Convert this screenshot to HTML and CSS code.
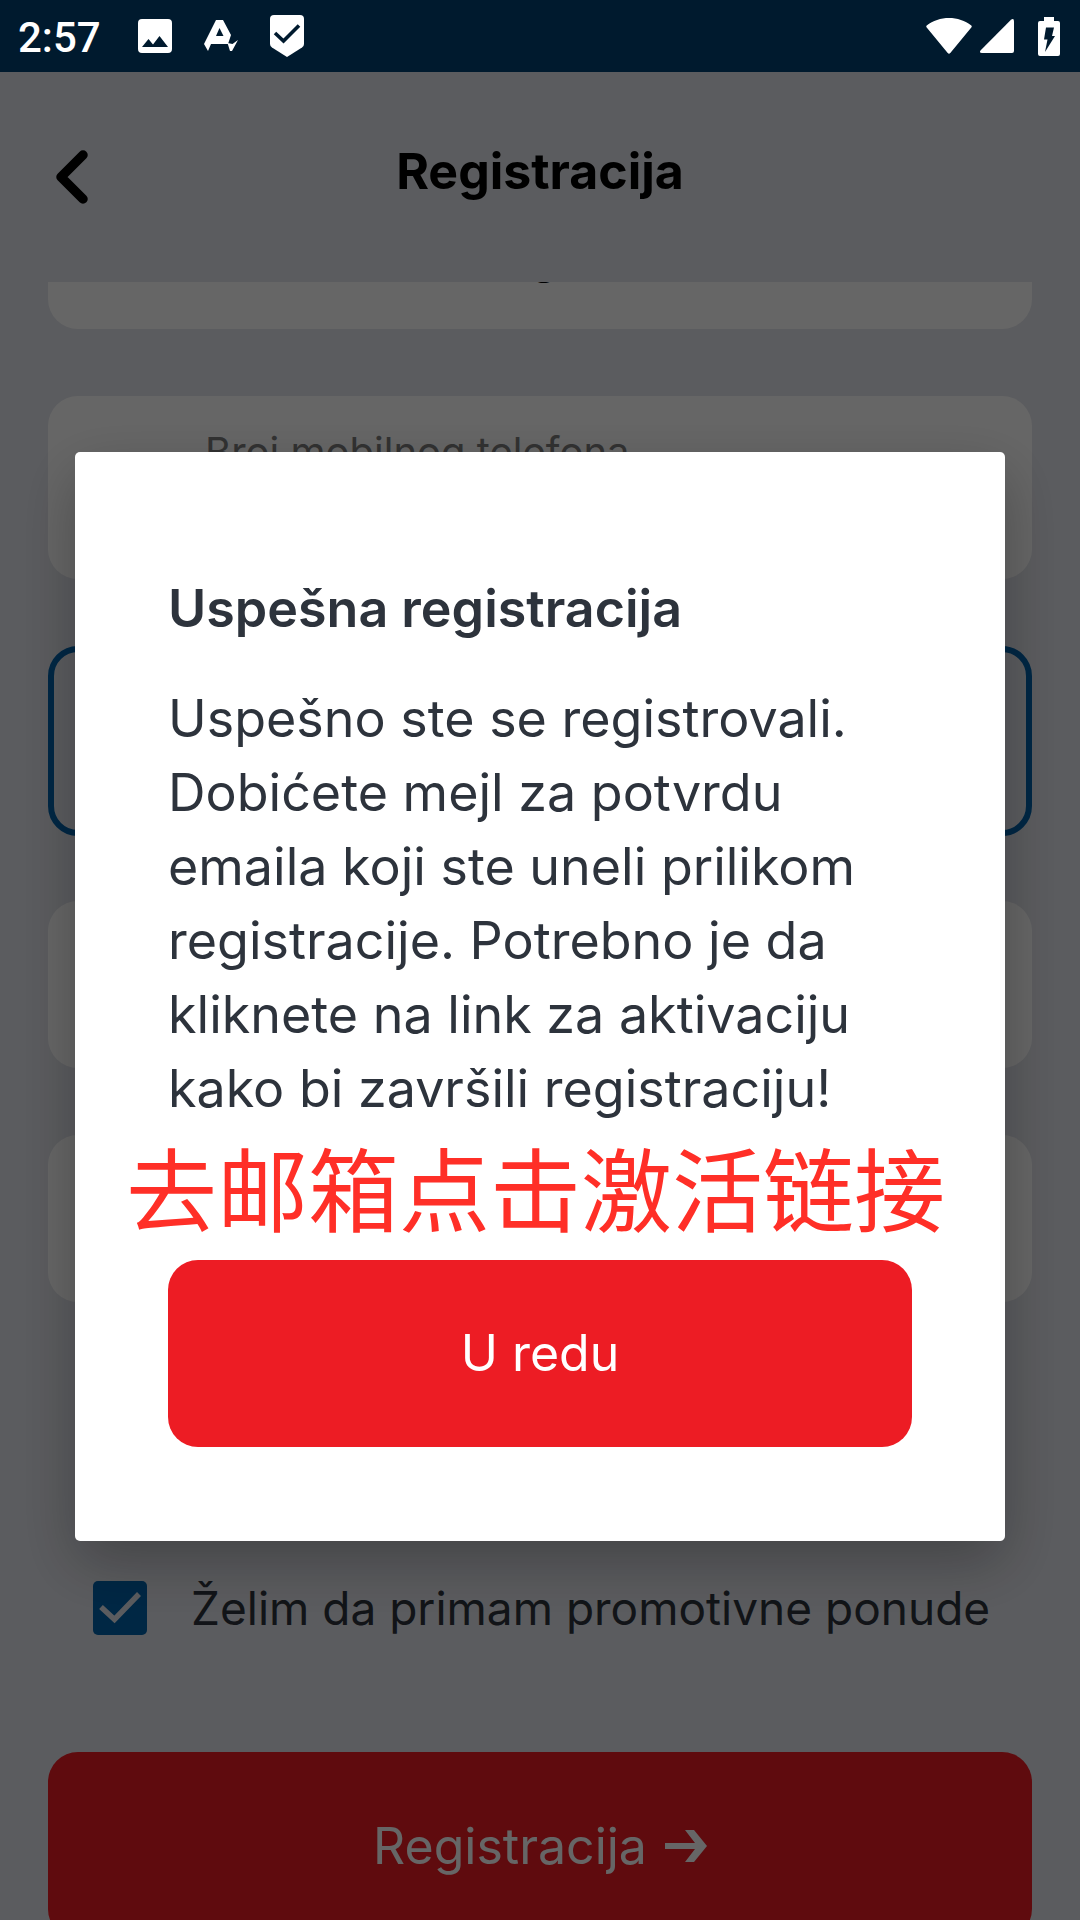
FILE: index.html
```html
<!DOCTYPE html>
<html lang="sr-Latn">
<head>
  <meta charset="utf-8">
  <meta name="viewport" content="width=device-width, initial-scale=1">
  <title>Registracija</title>
  <link rel="stylesheet" href="styles.css">
</head>
<body>
  <div class="status-bar">
    <span class="status-time">2:57</span>
    <svg class="status-icon status-icon-image" viewBox="0 0 34 34" aria-hidden="true">
      <path fill="currentColor" fill-rule="evenodd" d="M4 0h26a4 4 0 0 1 4 4v26a4 4 0 0 1-4 4H4a4 4 0 0 1-4-4V4a4 4 0 0 1 4-4zM4 28h26L21.500 17 15 25.500 10.500 20z"/>
    </svg>
    <svg class="status-icon status-icon-letter" viewBox="0 0 34 32" aria-hidden="true">
      <path fill="currentColor" fill-rule="evenodd" d="M12 0h7l8 15-3 9H7l-3 7-4-7zM15.500 8L12 16h7.500z"/>
      <path fill="currentColor" d="M23.500 23l5 1 5.500-4-6 11h-2z"/>
    </svg>
    <svg class="status-icon status-icon-shield" viewBox="0 0 34 42" aria-hidden="true">
      <path fill="currentColor" d="M4 0h26a4 4 0 0 1 4 4v25q0 2-2 3.500L17 42 2 32.500Q0 31 0 29V4a4 4 0 0 1 4-4z"/>
      <path fill="none" stroke="#001a2e" stroke-width="3.600" d="M5 18l8.500 8L29 10.500"/>
    </svg>
    <span class="status-spacer"></span>
    <svg class="status-icon status-icon-wifi" viewBox="0 0 46 36" aria-hidden="true">
      <path fill="currentColor" d="M.7 7.500C13-2.500 33-2.500 45.300 7.500q.9 1 0 2L24.300 35q-1.300 1.400-2.600 0L.7 9.500q-.9-1 0-2z"/>
    </svg>
    <svg class="status-icon status-icon-signal" viewBox="0 0 34 34" aria-hidden="true">
      <path fill="currentColor" d="M31 .7q3-1.700 3 1.600V32q0 2-2 2H2q-3.300 0-1.300-2.700z"/>
    </svg>
    <svg class="status-icon status-icon-battery" viewBox="0 0 22 39" aria-hidden="true">
      <path fill="currentColor" d="M6 0h10v4h4a2 2 0 0 1 2 2v31a2 2 0 0 1-2 2H2a2 2 0 0 1-2-2V6a2 2 0 0 1 2-2h4z"/>
      <path fill="#001a2e" d="M8 10.500h8l-2 8.500h3L7 35l2.500-12.500H6z"/>
    </svg>
  </div>

  <header class="app-header">
    <button class="back" type="button" aria-label="Nazad">
      <svg class="back-icon" viewBox="0 0 32 54" aria-hidden="true">
        <path fill="none" stroke="currentColor" stroke-width="9.500" stroke-linecap="round" stroke-linejoin="round" d="M27 5L5 27l22 22"/>
      </svg>
    </button>
    <h1 class="app-title">Registracija</h1>
  </header>

  <form class="form">
    <div class="field field-cut"><span class="field-cut-text">g</span></div>
    <div class="field field-phone">
      <label class="field-label" for="phone">Broj mobilnog telefona</label>
      <input class="field-input" id="phone" type="tel">
    </div>
    <div class="field field-active"><input class="field-input" type="text" aria-label="Adresa"></div>
    <div class="field"><input class="field-input" type="password" aria-label="Lozinka"></div>
    <div class="field"><input class="field-input" type="password" aria-label="Potvrda lozinke"></div>
    <div class="consent">
      <input class="consent-box" id="promo" type="checkbox" checked>
      <label class="consent-label" for="promo">Želim da primam promotivne ponude</label>
    </div>
    <button class="button submit" type="button">
      Registracija
      <svg class="submit-arrow" viewBox="0 0 42 32" aria-hidden="true">
        <path fill="currentColor" d="M0 13h30L20 0h9l13 16-13 16h-9l10-13H0z"/>
      </svg>
    </button>
  </form>

  <div class="overlay">
    <section class="dialog" role="dialog" aria-modal="true" aria-labelledby="dialog-title">
      <h2 class="dialog-title" id="dialog-title">Uspešna registracija</h2>
      <p class="dialog-text">Uspešno ste se registrovali. Dobićete mejl za potvrdu emaila koji ste uneli prilikom registracije. Potrebno je da kliknete na link za aktivaciju kako bi završili registraciju!</p>
      <p class="dialog-note" lang="zh">去邮箱点击激活链接</p>
      <button class="button" type="button">U redu</button>
    </section>
  </div>
</body>
</html>
```
FILE: styles.css
```css
* {
  box-sizing: border-box;
}

body {
  display: flex;
  flex-direction: column;
  height: 100vh;
  margin: 0;
  overflow: hidden;
  background: #e4e6ed;
  color: #2d333c;
  font-family: Inter, "Noto Sans CJK SC", sans-serif;
}

/* Status bar */
.status-bar {
  display: flex;
  flex: none;
  align-items: center;
  height: 72px;
  padding: 0 20px 0 18px;
  background: #001a2e;
  color: #fff;
}

.status-time {
  margin-right: 37px;
  padding-top: 3px;
  font: 500 42px/72px Roboto, sans-serif;
}

.status-icon {
  flex: none;
}

.status-icon-image {
  width: 34px;
  height: 34px;
  margin-right: 32px;
}

.status-icon-letter {
  width: 34px;
  height: 32px;
  margin-right: 32px;
}

.status-icon-shield {
  width: 34px;
  height: 42px;
}

.status-spacer {
  flex: 1;
}

.status-icon-wifi {
  width: 46px;
  height: 36px;
  margin-right: 8px;
}

.status-icon-signal {
  width: 34px;
  height: 34px;
  margin-right: 24px;
}

.status-icon-battery {
  width: 22px;
  height: 39px;
}

/* Header */
.app-header {
  display: grid;
  flex: none;
  grid-template-columns: 32px 1fr 32px;
  align-items: center;
  height: 210px;
  padding: 0 56px;
  color: #000;
}

.back {
  padding: 0;
  border: 0;
  background: none;
  color: inherit;
}

.back-icon {
  display: block;
  width: 32px;
  height: 54px;
}

.app-title {
  margin: 0;
  padding-bottom: 12px;
  font-size: 50px;
  font-weight: 700;
  line-height: 74px;
  text-align: center;
}

/* Form */
.form {
  display: flex;
  flex: 1;
  flex-direction: column;
  min-height: 0;
  padding: 0 48px;
  overflow: hidden;
}

.field {
  flex: none;
  height: 167px;
  margin-bottom: 67px;
  border-radius: 30px;
  background: #fff;
}

.field-cut {
  height: 47px;
  border-radius: 0 0 30px 30px;
  color: #000;
  text-align: center;
}

.field-cut-text {
  display: block;
  height: 47px;
  margin-top: -49px;
  padding-left: 8px;
  font-size: 46px;
  line-height: 47px;
}

.field-phone {
  height: 183px;
  padding: 28px 157px;
}

.field-active {
  height: 190px;
  margin-bottom: 65px;
  border: 6px solid #0062ab;
  background: transparent;
}

.field-label {
  display: block;
  color: #7d7d7d;
  font-size: 40px;
  line-height: 56px;
}

.field-input {
  width: 100%;
  height: 70px;
  border: 0;
  outline: 0;
  background: transparent;
}

.consent {
  display: flex;
  flex: none;
  align-items: center;
  gap: 44px;
  margin: 206px 0 111px;
  padding-left: 45px;
}

.consent-box {
  flex: none;
  width: 54px;
  height: 54px;
  margin: 0;
  border-radius: 5px;
  appearance: none;
  background: #0062ab url("data:image/svg+xml,%3Csvg xmlns='http://www.w3.org/2000/svg' viewBox='0 0 54 54'%3E%3Cpath d='M8 26l13.500 12.500L46 13' fill='none' stroke='%23e4e6ed' stroke-width='5.500'/%3E%3C/svg%3E");
}

.consent-label {
  font-size: 46px;
  line-height: 66px;
  white-space: nowrap;
}

/* Buttons */
.button {
  display: flex;
  flex: none;
  align-items: center;
  justify-content: center;
  width: 100%;
  height: 187px;
  padding: 0;
  border: 0;
  border-radius: 30px;
  background: #ed1c24;
  color: #fff;
  font: 400 50px/74px Inter, sans-serif;
}

.submit {
  gap: 18px;
}

.submit-arrow {
  width: 42px;
  height: 32px;
}

/* Dialog */
.overlay {
  position: fixed;
  inset: 72px 0 0;
  display: flex;
  align-items: center;
  padding: 0 75px;
  background: rgba(0, 0, 0, 0.6);
}

.dialog {
  flex: 1;
  padding: 120px 93px 94px;
  border-radius: 5px;
  background: #fff;
  box-shadow: 0 22px 60px rgba(0, 0, 0, 0.27);
}

.dialog-title {
  margin: 0 0 36px;
  font-size: 52px;
  font-weight: 600;
  line-height: 74px;
}

.dialog-text {
  margin: 0;
  font-size: 52px;
  line-height: 74px;
}

.dialog-note {
  margin: 14px -42px 30px;
  color: #ff2f27;
  font-family: "Noto Sans CJK SC", sans-serif;
  font-size: 91px;
  line-height: 90px;
  white-space: nowrap;
}
```
